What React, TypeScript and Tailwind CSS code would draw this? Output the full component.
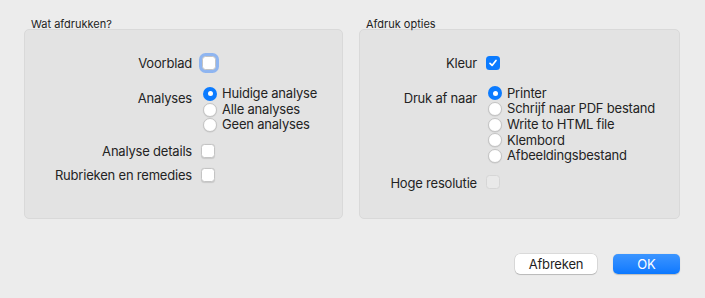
import React from "react";

function Checkbox({ checked, focused, disabled }: { checked?: boolean; focused?: boolean; disabled?: boolean }) {
  if (checked) {
    return (
      <span className="flex h-[14px] w-[14px] items-center justify-center rounded-[3.5px] bg-[#0b7bff]">
        <svg width="10" height="10" viewBox="0 0 10 10">
          <path d="M2 5.3 L4.1 7.4 L8 2.4" fill="none" stroke="white" strokeWidth="1.7" strokeLinecap="round" strokeLinejoin="round" />
        </svg>
      </span>
    );
  }
  return (
    <span
      className={
        "block h-[14px] w-[14px] rounded-[3.5px] border " +
        (disabled
          ? "border-[#d6d6d6] bg-[#e9e9e9]"
          : "border-[#c4c4c4] bg-white shadow-[0_0.5px_1px_rgba(0,0,0,0.12)]") +
        (focused ? " ring-[3px] ring-[#8fb5f0]" : "")
      }
    />
  );
}

function Radio({ checked }: { checked?: boolean }) {
  if (checked) {
    return (
      <span className="flex h-[14px] w-[14px] items-center justify-center rounded-full bg-[#0b7bff]">
        <span className="h-[5px] w-[5px] rounded-full bg-white" />
      </span>
    );
  }
  return <span className="block h-[14px] w-[14px] rounded-full border border-[#c4c4c4] bg-white shadow-[0_0.5px_1px_rgba(0,0,0,0.12)]" />;
}

function RadioGroup({ options, selected }: { options: string[]; selected: number }) {
  return (
    <div className="flex flex-col">
      {options.map((opt, i) => (
        <div key={opt} className="flex h-[15.7px] items-center gap-[5px]">
          <Radio checked={i === selected} />
          <span>{opt}</span>
        </div>
      ))}
    </div>
  );
}

export default function App() {
  return (
    <div
      className="h-[298px] w-[705px] bg-[#ececec] text-[13px] tracking-[-0.2px] text-[#232323]"
      style={{ fontFamily: "Inter, 'Liberation Sans', sans-serif" }}
    >
      <div className="flex gap-[16px] pl-[24px] pt-[17px]">
        {/* Wat afdrukken? */}
        <div className="w-[319px]">
          <div className="h-[12px] pl-[7px] text-[11px] leading-[14px] tracking-[0px]">Wat afdrukken?</div>
          <div className="h-[190px] rounded-[5px] border border-[#d9d9d9] bg-[#e3e3e3] pt-[23px]">
            <div className="flex h-[20px] items-center">
              <span className="w-[167px] pt-[2px] text-right">Voorblad</span>
              <span className="ml-[10px]"><Checkbox focused /></span>
            </div>
            <div className="mt-[13px] flex">
              <span className="w-[167px] pt-[3px] text-right">Analyses</span>
              <span className="ml-[11px]">
                <RadioGroup options={["Huidige analyse", "Alle analyses", "Geen analyses"]} selected={0} />
              </span>
            </div>
            <div className="mt-[8px] flex h-[20px] items-center">
              <span className="w-[167px] pt-[2px] text-right">Analyse details</span>
              <span className="ml-[9px]"><Checkbox /></span>
            </div>
            <div className="mt-[3.5px] flex h-[20px] items-center">
              <span className="w-[167px] pt-[2px] text-right">Rubrieken en remedies</span>
              <span className="ml-[9px]"><Checkbox /></span>
            </div>
          </div>
        </div>

        {/* Afdruk opties */}
        <div className="w-[321px]">
          <div className="h-[12px] pl-[7px] text-[11px] leading-[14px] tracking-[0px]">Afdruk opties</div>
          <div className="h-[190px] rounded-[5px] border border-[#d9d9d9] bg-[#e3e3e3] pt-[23px]">
            <div className="flex h-[20px] items-center">
              <span className="w-[117px] pt-[2px] text-right">Kleur</span>
              <span className="ml-[9px]"><Checkbox checked /></span>
            </div>
            <div className="mt-[12.5px] flex">
              <span className="w-[117px] pt-[3px] text-right">Druk af naar</span>
              <span className="ml-[11px]">
                <RadioGroup
                  options={["Printer", "Schrijf naar PDF bestand", "Write to HTML file", "Klembord", "Afbeeldingsbestand"]}
                  selected={0}
                />
              </span>
            </div>
            <div className="mt-[8px] flex h-[20px] items-center">
              <span className="w-[117px] pt-[3px] text-right">Hoge resolutie</span>
              <span className="ml-[9px]"><Checkbox disabled /></span>
            </div>
          </div>
        </div>
      </div>

      <div className="mt-[35px] flex justify-end gap-[16px] pr-[25px]">
        <button className="h-[20px] w-[82px] rounded-[5px] bg-white text-[13px] leading-[20px] text-[#1e1e1e] shadow-[0_0_0_0.5px_rgba(0,0,0,0.15),0_1px_1px_rgba(0,0,0,0.15)]">
          Afbreken
        </button>
        <button className="h-[20px] w-[67px] rounded-[5px] bg-gradient-to-b from-[#3b95ff] to-[#0a78ff] text-[13px] leading-[20px] text-white shadow-[0_0.5px_1px_rgba(0,0,0,0.2)]">
          OK
        </button>
      </div>
    </div>
  );
}
